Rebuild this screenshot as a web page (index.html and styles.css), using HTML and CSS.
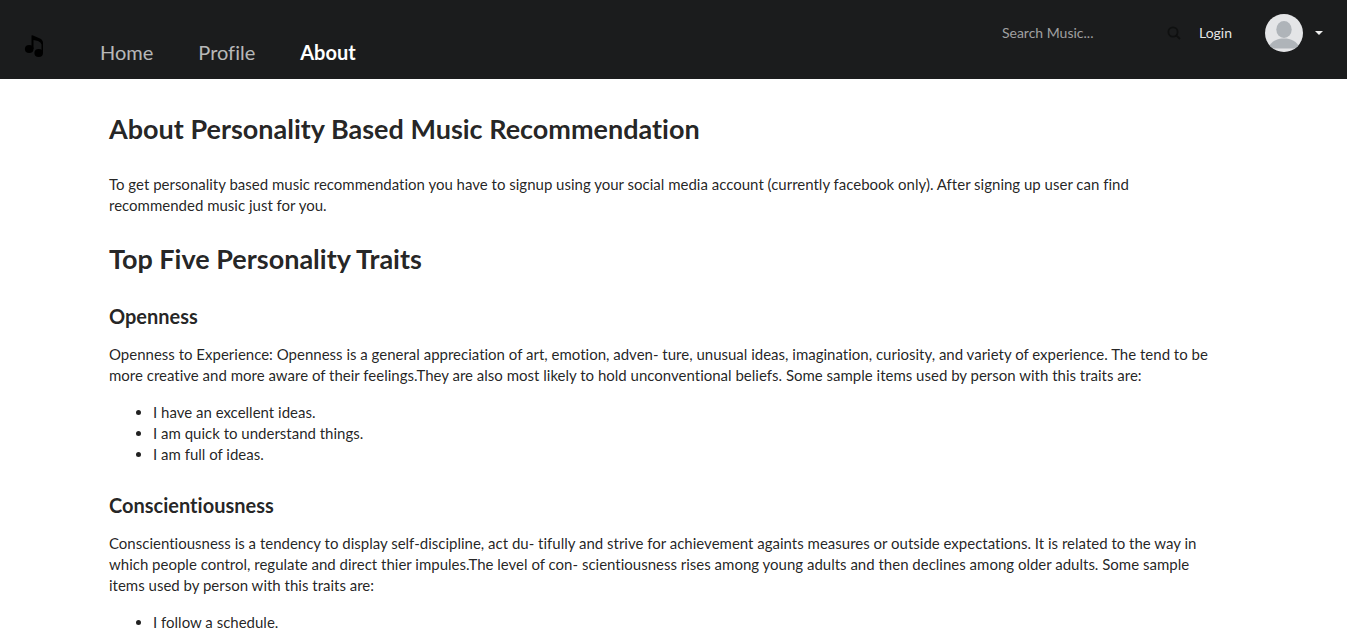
FILE: index.html
```html
<!DOCTYPE html>
<html lang="en">
<head>
<meta charset="utf-8">
<title>About Personality Based Music Recommendation</title>
<link rel="stylesheet" href="styles.css">
</head>
<body>
<header class="menu">
  <a class="logo" href="#" aria-label="Music home">
    <svg viewBox="0 0 20 22" width="20" height="22" aria-hidden="true"><path d="M7.5 0.5Q8 0 9 0.4L16 3.5Q19 5 19 8V18H17.5V9.5Q17 7 14 6L9.5 5V14H7.5Z"/><ellipse cx="5.2" cy="14" rx="4.3" ry="3.9"/><ellipse cx="14.7" cy="18" rx="4.3" ry="3.9"/></svg>
  </a>
  <nav class="nav">
    <a href="#">Home</a>
    <a href="#">Profile</a>
    <a class="active" href="#">About</a>
  </nav>
  <div class="right">
    <form class="search">
      <input type="text" placeholder="Search Music..." aria-label="Search Music">
      <button type="button" aria-label="Search"><svg viewBox="0 0 14 14" width="14" height="14" aria-hidden="true"><circle cx="6" cy="6" r="4.6"/><path d="M9.3 9.3 13 13"/></svg></button>
    </form>
    <a class="login" href="#">Login</a>
    <button class="account" type="button" aria-label="Account menu">
      <svg class="avatar" viewBox="0 0 38 38" width="38" height="38" aria-hidden="true"><defs><clipPath id="face"><circle cx="19" cy="19" r="19"/></clipPath></defs><g clip-path="url(#face)"><path class="back" d="M0 0H38V38H0Z"/><ellipse cx="19" cy="15.5" rx="7.7" ry="8.5"/><path d="M3 34.5C6 27 12 24.5 19 24.5S32 27 35 34.5Z"/></g></svg>
      <svg class="caret" viewBox="0 0 8 4" width="8" height="4" aria-hidden="true"><path d="M0 0H8L4 4Z"/></svg>
    </button>
  </div>
</header>
<main class="content">
  <h1>About Personality Based Music Recommendation</h1>
  <p>To get personality based music recommendation you have to signup using your social media account (currently facebook only). After signing up user can find recommended music just for you.</p>
  <h1>Top Five Personality Traits</h1>
  <h2>Openness</h2>
  <p>Openness to Experience: Openness is a general appreciation of art, emotion, adven- ture, unusual ideas, imagination, curiosity, and variety of experience. The tend to be more creative and more aware of their feelings.They are also most likely to hold unconventional beliefs. Some sample items used by person with this traits are:</p>
  <ul>
    <li>I have an excellent ideas.</li>
    <li>I am quick to understand things.</li>
    <li>I am full of ideas.</li>
  </ul>
  <h2>Conscientiousness</h2>
  <p>Conscientiousness is a tendency to display self-discipline, act du- tifully and strive for achievement againts measures or outside expectations. It is related to the way in which people control, regulate and direct thier impules.The level of con- scientiousness rises among young adults and then declines among older adults. Some sample items used by person with this traits are:</p>
  <ul>
    <li>I follow a schedule.</li>
  </ul>
</main>
</body>
</html>
```
FILE: styles.css
```css
* { box-sizing: border-box; }
html { overflow: hidden; }
body { margin: 0; font: 15px/21px Lato, "Liberation Sans", sans-serif; font-variant-ligatures: no-common-ligatures; color: rgba(0, 0, 0, 0.87); background: #fff; }
a { color: inherit; text-decoration: none; }
button, input { font: inherit; border: 0; padding: 0; background: none; }
.menu { display: flex; padding: 0 24px; background: #1b1c1d; color: rgba(255, 255, 255, 0.9); }
.logo { display: flex; align-items: center; width: 76px; padding-top: 13px; fill: #000; }
.nav { display: flex; gap: 45px; padding: 40px 0 15px; font-size: 20px; line-height: 24px; color: rgba(255, 255, 255, 0.7); }
.nav .active { font-weight: 700; color: #fff; }
.right { display: flex; align-items: center; height: 66px; margin-left: auto; font-size: 14px; line-height: 20px; }
.search { display: flex; align-items: center; margin-right: 18px; }
.search input { width: 165px; color: #fff; }
.search input::placeholder { color: #a0a0a1; opacity: 1; }
.search button { display: flex; }
.search svg { fill: none; stroke: #0f1010; stroke-width: 1.8; }
.login { margin-right: 33px; }
.account { display: flex; align-items: center; gap: 12px; }
.avatar { fill: #afb4b9; }
.avatar .back { fill: #e4e5e7; }
.caret { fill: #eee; }
.content { margin: 0 124px 0 109px; padding-top: 33px; }
h1 { margin: 0 0 29px; font-size: 27px; line-height: 33px; }
h2 { margin: 0 0 15px; font-size: 20px; line-height: 25px; }
p { margin: 0 0 16px; }
p + h1 { margin-top: 26px; }
ul { margin: 0 0 28px; padding-left: 44px; }
```
